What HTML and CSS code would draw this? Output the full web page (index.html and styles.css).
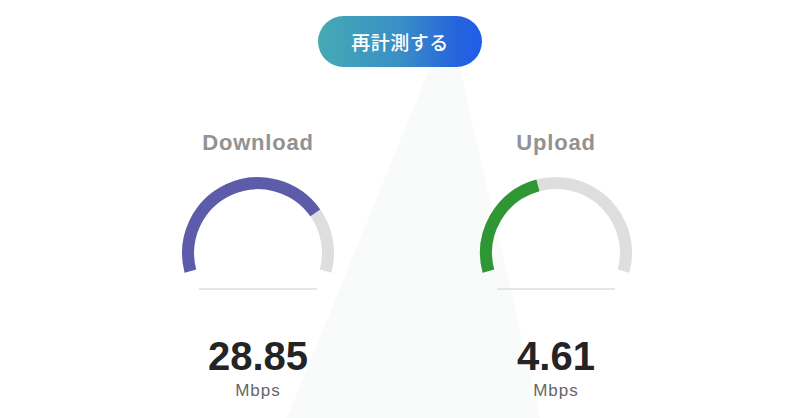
FILE: index.html
```html
<!DOCTYPE html>
<html>
<head>
    <title>Speed Test</title>
    <link rel="stylesheet" href="styles.css">
</head>
<body>
    <div class="beam"></div>
    <div class="page">
        <div class="top">
            <button class="retest">再計測する</button>
        </div>
        <div class="gauges">
            <div class="gauge">
                <h2 class="label">Download</h2>
                <svg class="dial" width="164" height="100" viewBox="0 0 164 100">
                    <path class="track" d="M 14.4 96.1 A 70 70 0 1 1 149.6 96.1" />
                    <path class="fill down" d="M 14.4 96.1 A 70 70 0 0 1 139.3 37.9" />
                </svg>
                <div class="rule"></div>
                <div class="value">28.85</div>
                <div class="unit">Mbps</div>
            </div>
            <div class="gauge">
                <h2 class="label">Upload</h2>
                <svg class="dial" width="164" height="100" viewBox="0 0 164 100">
                    <path class="track" d="M 14.4 96.1 A 70 70 0 1 1 149.6 96.1" />
                    <path class="fill up" d="M 14.4 96.1 A 70 70 0 0 1 63.9 10.4" />
                </svg>
                <div class="rule"></div>
                <div class="value">4.61</div>
                <div class="unit">Mbps</div>
            </div>
        </div>
    </div>
</body>
</html>
```
FILE: styles.css
```css
body {
    font-family: 'Liberation Sans', Arial, sans-serif;
    background-color: #fff;
    margin: 0;
    padding: 0;
    width: 800px;
    height: 418px;
    overflow: hidden;
    position: relative;
}
.beam {
    position: absolute;
    left: 0;
    top: 0;
    width: 800px;
    height: 418px;
    background-color: #f9fafa;
    clip-path: polygon(433px 60px, 458px 60px, 540px 418px, 287px 418px);
}
.page {
    position: relative;
}
.top {
    display: flex;
    justify-content: center;
    padding-top: 16px;
}
.retest {
    width: 164px;
    height: 51px;
    border: none;
    border-radius: 26px;
    background: linear-gradient(90deg, #45aab4 0%, #3a8fc6 50%, #2563de 85%, #1f5ee6 100%);
    color: #fff;
    font-family: 'Noto Sans CJK JP', sans-serif;
    font-size: 19px;
    font-weight: 500;
    letter-spacing: 0.5px;
    cursor: pointer;
}
.gauges {
    display: flex;
    gap: 118px;
    padding-left: 168px;
}
.gauge {
    width: 180px;
    display: flex;
    flex-direction: column;
    align-items: center;
}
.label {
    margin: 63px 0 0;
    font-size: 22px;
    line-height: 26px;
    font-weight: 600;
    letter-spacing: 0.8px;
    color: #929292;
}
.dial {
    margin-top: 19px;
    display: block;
}
.dial path {
    fill: none;
    stroke-width: 12;
}
.track {
    stroke: #dedede;
}
.down {
    stroke: #5d5caa;
}
.up {
    stroke: #2e9734;
}
.rule {
    width: 118px;
    height: 2px;
    margin-top: 13px;
    background-color: #e6e6e6;
}
.value {
    margin-top: 43px;
    font-size: 40px;
    line-height: 46px;
    font-weight: bold;
    color: #242424;
}
.unit {
    margin-top: 3px;
    font-size: 17px;
    line-height: 18px;
    letter-spacing: 1px;
    color: #666;
}
```
